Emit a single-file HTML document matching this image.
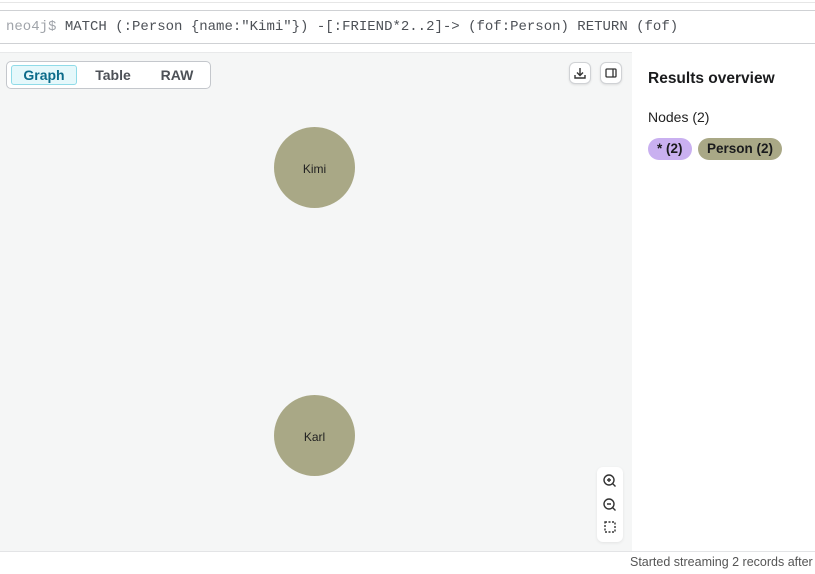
<!DOCTYPE html>
<html><head><meta charset="utf-8"><style>
body{margin:0;width:815px;height:574px;overflow:hidden;background:#fff;font-family:"Liberation Sans",sans-serif;position:relative}
.topline{position:absolute;left:0;top:2px;width:815px;height:1px;background:#e6e6e6}
.editor{position:absolute;left:0;top:10px;width:815px;height:32px;border-top:1px solid #cfd1d4;border-bottom:1px solid #cfd1d4;font-family:"Liberation Mono",monospace;font-size:14px;line-height:32px;color:#4d5157;padding-left:6px;box-sizing:content-box;white-space:pre}
.editor .p{color:#a0a4aa}
.graph{position:absolute;left:0;top:52px;width:632px;height:499px;background:#f5f6f6;border-top:1px solid #e8e9ea}
.foot{position:absolute;left:0;top:551px;width:815px;height:1px;background:#e3e4e6}
.tabs{position:absolute;left:6px;top:61px;width:203px;height:26px;border:1px solid #c4c7cc;border-radius:5px;background:#fff}
.tab{position:absolute;top:3px;height:20px;line-height:20px;font-size:14px;font-weight:bold;color:#4d5157;text-align:center}
.tab.a{left:4px;width:64px;background:#e5f8fb;border:1px solid #8fdbe8;border-radius:3px;color:#0b6b8a;height:18px;line-height:18px}
.node{position:absolute;width:81px;height:81px;border-radius:50%;background:#a9a886;font-size:12px;color:#222;text-align:center;line-height:84px}
.btn{position:absolute;width:20px;height:20px;border:1px solid #d0d2d5;border-radius:6px;background:#fff;box-shadow:0 1px 2px rgba(0,0,0,.1)}
.zoom{position:absolute;left:597px;top:467px;width:26px;height:75px;background:#fff;border-radius:6px;box-shadow:0 1px 3px rgba(0,0,0,.08)}
h3{position:absolute;left:648px;top:70px;margin:0;font-size:15.5px;color:#1a1b1d}
.nodes{position:absolute;left:648px;top:109px;font-size:14px;color:#222}
.pill{position:absolute;top:138px;height:22px;line-height:22px;border-radius:11px;font-size:13.5px;font-weight:bold;color:#1a1b1d;padding:0 9px}
.status{position:absolute;left:630px;top:555px;font-size:12.5px;color:#555;white-space:nowrap}
</style></head><body>
<div class="topline"></div>
<div class="editor"><span class="p">neo4j$</span> MATCH (:Person {name:"Kimi"}) -[:FRIEND*2..2]-> (fof:Person) RETURN (fof)</div>
<div class="graph"></div>
<div class="tabs">
<div class="tab a">Graph</div>
<div class="tab" style="left:76px;width:60px">Table</div>
<div class="tab" style="left:140px;width:60px">RAW</div>
</div>
<div class="btn" style="left:569px;top:62px"><svg width="20" height="20" viewBox="0 0 20 20" fill="none" stroke="#333" stroke-width="1.4"><path d="M10 5v7M7 9.5l3 3 3-3M5 12v3h10v-3"/></svg></div>
<div class="btn" style="left:600px;top:62px"><svg width="20" height="20" viewBox="0 0 20 20" fill="none" stroke="#333" stroke-width="1.3"><rect x="5" y="6" width="10" height="8" rx="1"/><path d="M12 6v8"/></svg></div>
<div class="node" style="left:274px;top:127px">Kimi</div>
<div class="node" style="left:274px;top:395px">Karl</div>
<div class="zoom"><svg width="26" height="75" viewBox="0 0 26 75" fill="none" stroke="#333" stroke-width="1.4"><circle cx="12" cy="13" r="5"/><path d="M15.5 16.5l3 3M10 13h4M12 11v4"/><circle cx="12" cy="37" r="5"/><path d="M15.5 40.5l3 3M10 37h4"/><rect x="8" y="55" width="10" height="10" stroke-dasharray="2 1.5"/></svg></div>
<h3>Results overview</h3>
<div class="nodes">Nodes (2)</div>
<div class="pill" style="left:648px;background:#c9b0f0">* (2)</div>
<div class="pill" style="left:698px;background:#a9a886">Person (2)</div>
<div class="foot"></div>
<div class="status">Started streaming 2 records after</div>
</body></html>
